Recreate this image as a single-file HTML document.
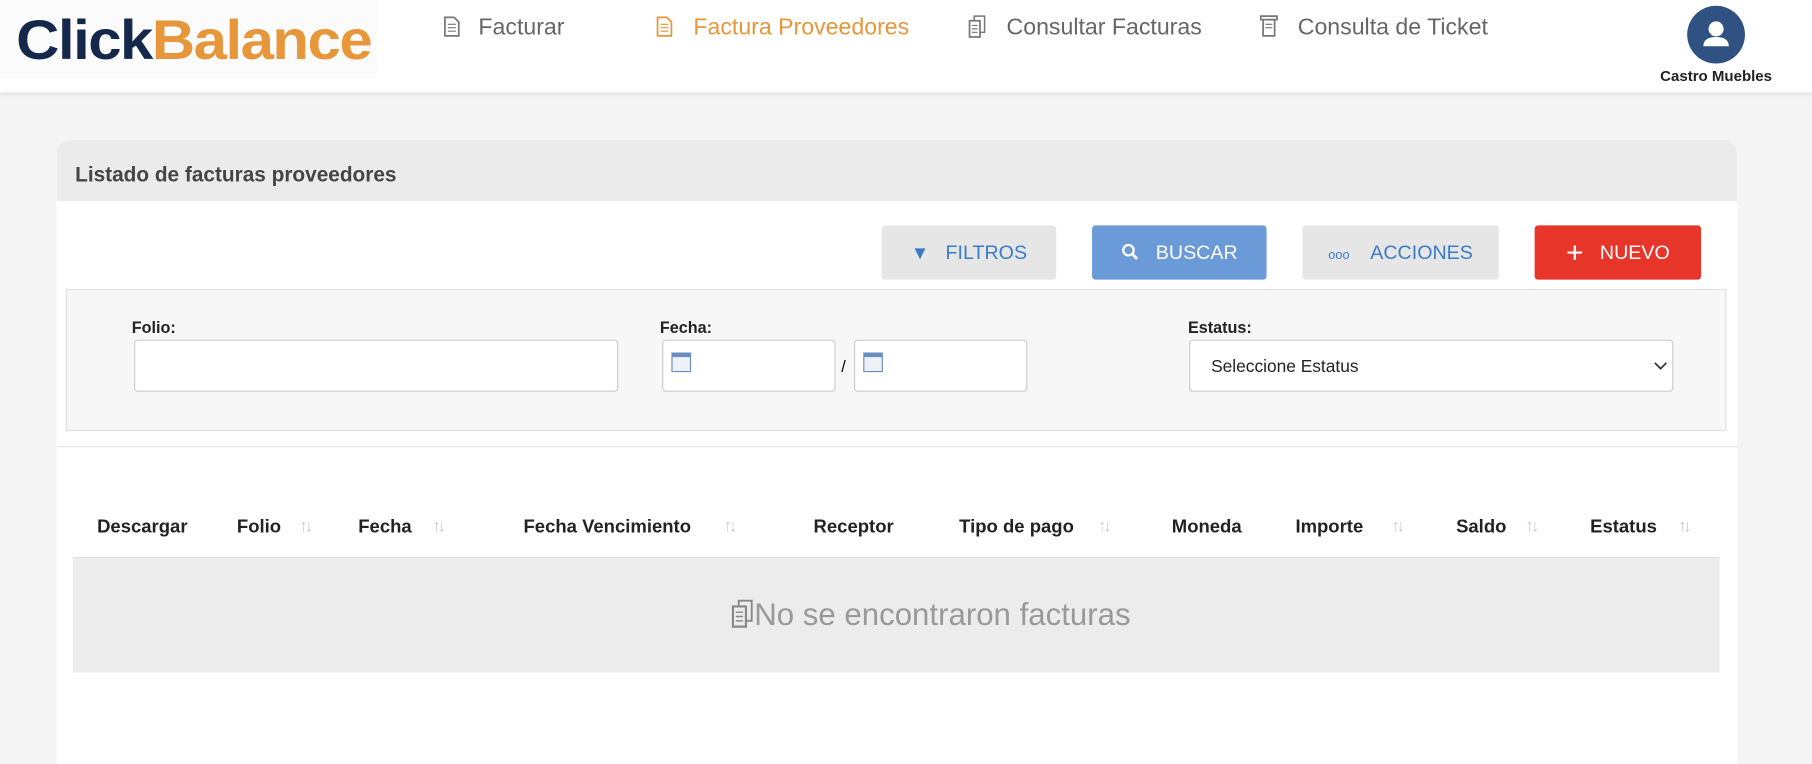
<!DOCTYPE html>
<html><head><meta charset="utf-8"><style>
*{box-sizing:border-box;margin:0;padding:0}
html,body{width:1812px;height:742px;overflow:hidden;background:#f4f4f4;font-family:"Liberation Sans",sans-serif}
#w{position:absolute;left:0;top:0;width:1568px;height:642px;transform:scale(1.15561);transform-origin:0 0;background:#f4f4f4}
.a{position:absolute}
.hdr{left:0;top:0;width:1568px;height:80px;background:#fff;box-shadow:0 2px 3px rgba(0,0,0,.08)}
.logo{left:0;top:0;width:326px;height:68px;background:#fbfbfb}
.logo span.t{position:absolute;left:14px;top:10px;font-size:48px;font-weight:bold;letter-spacing:-1.2px;line-height:52px;transform:scaleX(1.08);transform-origin:0 0;white-space:nowrap}
.nav{font-size:20px;color:#666;top:13px}
.card{left:49px;top:121px;width:1454px;height:540px;background:#fff;border-radius:12px 12px 0 0;overflow:hidden}
.ch{left:0;top:0;width:1454px;height:53px;background:#ebebeb}
.btn{top:74px;height:47px;border-radius:3px;font-size:17px;line-height:47px;text-align:center}
.lbl{font-size:14px;font-weight:bold;color:#222}
.inp{background:#fff;border:1px solid #ccc;border-radius:3px;height:45px;top:43px}
.th{top:327px;font-size:16px;font-weight:bold;color:#222}
.s{color:#ccc;font-size:15px;top:326px;letter-spacing:-3px}
</style></head><body><div id="w">
<div class="a hdr"></div>
<div class="a logo"><span class="t"><span style="color:#14284b">Click</span><span style="color:#e8963a">Balance</span></span></div>
<svg class="a" style="left:384px;top:14px" width="14" height="18" viewBox="0 0 14 18"><path d="M1 1h8l4 4v12H1z" fill="none" stroke="#777" stroke-width="1.5"/><path d="M3.5 7h7M3.5 10h7M3.5 13h7" stroke="#777"/></svg>
<div class="a nav" style="left:414px">Facturar</div>
<svg class="a" style="left:568px;top:14px" width="14" height="18" viewBox="0 0 14 18"><path d="M1 1h8l4 4v12H1z" fill="none" stroke="#e8963a" stroke-width="1.5"/><path d="M3.5 7h7M3.5 10h7M3.5 13h7" stroke="#e8963a"/></svg>
<div class="a nav" style="left:600px;color:#e8963a">Factura Proveedores</div>
<svg class="a" style="left:838px;top:13px" width="16" height="20" viewBox="0 0 16 20"><path d="M5 1h9v14H5z" fill="#fff" stroke="#777" stroke-width="1.3"/><path d="M1 5h9v14H1z" fill="#fff" stroke="#777" stroke-width="1.5"/><path d="M3 9h5M3 12h5M3 15h5" stroke="#777"/></svg>
<div class="a nav" style="left:871px">Consultar Facturas</div>
<svg class="a" style="left:1090px;top:13px" width="16" height="19" viewBox="0 0 16 19"><path d="M1 1h14v3H1zM3 4h10v14H3z" fill="none" stroke="#777" stroke-width="1.5"/><path d="M5 8h6M5 11h6" stroke="#777"/></svg>
<div class="a nav" style="left:1123px">Consulta de Ticket</div>
<div class="a" style="left:1460px;top:5px;width:50px;height:50px;border-radius:50%;background:#2f5282"></div>
<svg class="a" style="left:1460px;top:5px" width="50" height="50" viewBox="0 0 50 50"><circle cx="25" cy="20" r="6.5" fill="#fff"/><path d="M14 35c0-6 5-8 11-8s11 2 11 8z" fill="#fff"/></svg>
<div class="a" style="left:1425px;top:58px;width:120px;text-align:center;font-size:13px;font-weight:bold;color:#222">Castro Muebles</div>

<div class="a card">
<div class="a ch"></div>
<div class="a" style="left:16px;top:20px;font-size:18px;font-weight:bold;color:#444">Listado de facturas proveedores</div>
<div class="a btn" style="left:714px;width:151px;background:#e6e6e6;color:#3a7bc8"><span style="font-size:16px">&#9660;</span>&nbsp;&nbsp; FILTROS</div>
<div class="a btn" style="left:896px;width:151px;background:#6a9bd8;color:#fff"><svg width="16" height="16" viewBox="0 0 16 16" style="vertical-align:-2px"><circle cx="6.5" cy="6.5" r="4.5" fill="none" stroke="#fff" stroke-width="2"/><path d="M10 10l4 4" stroke="#fff" stroke-width="2.5"/></svg>&nbsp;&nbsp; BUSCAR</div>
<div class="a btn" style="left:1078px;width:170px;background:#e6e6e6;color:#3a7bc8"><span style="font-size:11px">ooo</span>&nbsp;&nbsp;&nbsp; ACCIONES</div>
<div class="a btn" style="left:1279px;width:144px;background:#e8352a;color:#fff"><span style="font-size:26px;vertical-align:-3px">+</span>&nbsp;&nbsp; NUEVO</div>

<div class="a" style="left:8px;top:129px;width:1437px;height:123px;background:#f7f7f7;border:1px solid #e0e0e0">
 <div class="a lbl" style="left:56px;top:24px">Folio:</div>
 <div class="a inp" style="left:58px;width:419px"></div>
 <div class="a lbl" style="left:513px;top:24px">Fecha:</div>
 <div class="a inp" style="left:515px;width:150px"><div class="a" style="left:7px;top:10px;width:17px;height:17px;border:1px solid #6a8ec0;background:#eef2f8;border-top:4px solid #6a8ec0"></div></div>
 <div class="a" style="left:670px;top:58px;font-size:14px">/</div>
 <div class="a inp" style="left:681px;width:150px"><div class="a" style="left:7px;top:10px;width:17px;height:17px;border:1px solid #6a8ec0;background:#eef2f8;border-top:4px solid #6a8ec0"></div></div>
 <div class="a lbl" style="left:970px;top:24px">Estatus:</div>
 <div class="a inp" style="left:971px;width:419px"><div class="a" style="left:18px;top:14px;font-size:15px;color:#222">Seleccione Estatus</div><svg class="a" style="left:401px;top:18px" width="12" height="8" viewBox="0 0 12 8"><path d="M1 1l5 5 5-5" fill="none" stroke="#333" stroke-width="1.5"/></svg></div>
</div>
<div class="a" style="left:0;top:265px;width:1454px;height:1px;background:#e6e6e6"></div>

<div class="a th" style="left:35px">Descargar</div>
<div class="a th" style="left:156px">Folio</div><div class="a s" style="left:210px">↑↓</div>
<div class="a th" style="left:261px">Fecha</div><div class="a s" style="left:325px">↑↓</div>
<div class="a th" style="left:404px">Fecha Vencimiento</div><div class="a s" style="left:577px">↑↓</div>
<div class="a th" style="left:655px">Receptor</div>
<div class="a th" style="left:781px">Tipo de pago</div><div class="a s" style="left:901px">↑↓</div>
<div class="a th" style="left:965px">Moneda</div>
<div class="a th" style="left:1072px">Importe</div><div class="a s" style="left:1155px">↑↓</div>
<div class="a th" style="left:1211px">Saldo</div><div class="a s" style="left:1271px">↑↓</div>
<div class="a th" style="left:1327px">Estatus</div><div class="a s" style="left:1403px">↑↓</div>
<div class="a" style="left:14px;top:361px;width:1425px;height:1px;background:#ddd"></div>
<div class="a" style="left:14px;top:362px;width:1425px;height:99px;background:#ececec"></div>
<div class="a" style="left:44px;top:396px;width:1425px;text-align:center;font-size:27px;color:#999"><svg width="20" height="28" viewBox="0 0 16 20" style="vertical-align:-4px"><path d="M5 1h9v14H5z" fill="#ececec" stroke="#888" stroke-width="1.3"/><path d="M1 5h9v14H1z" fill="#ececec" stroke="#888" stroke-width="1.5"/><path d="M3 9h5M3 12h5M3 15h5" stroke="#888"/></svg>No se encontraron facturas</div>
</div>
</div></body></html>
